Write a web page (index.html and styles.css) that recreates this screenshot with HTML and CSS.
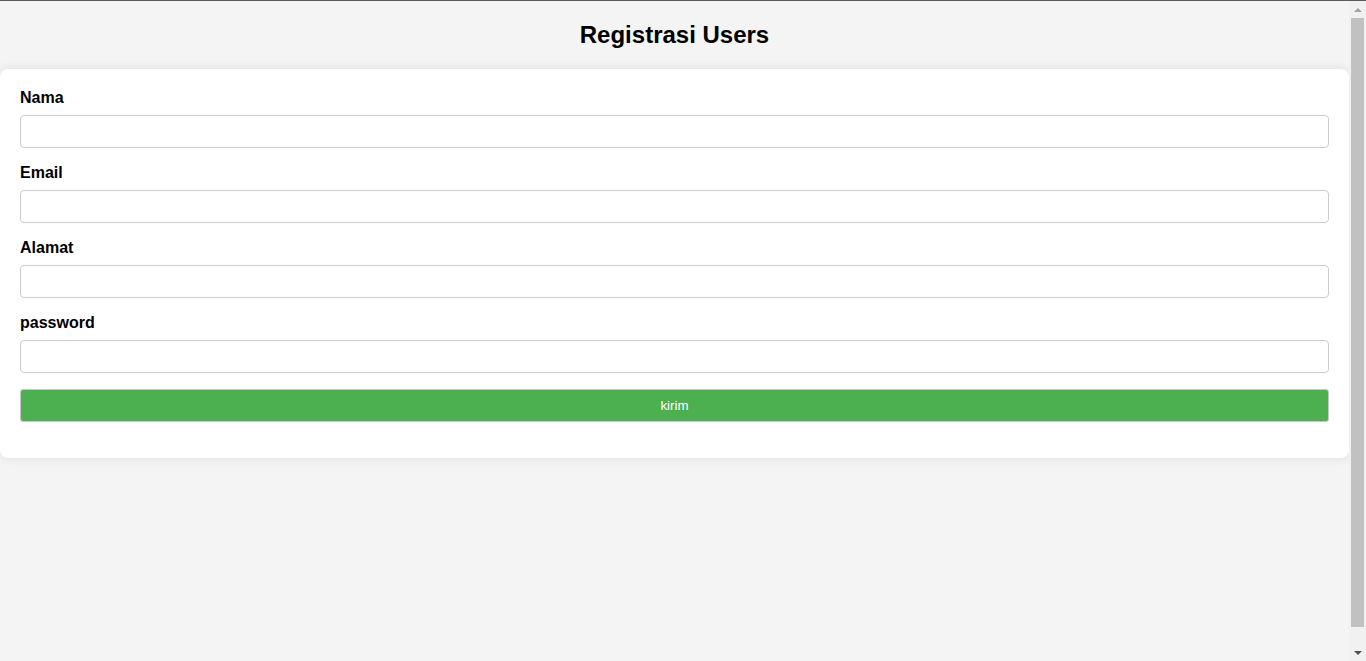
FILE: index.html
```html
<!DOCTYPE html>
<html lang="id">
<head>
<meta charset="utf-8">
<title>Registrasi Users</title>
<link rel="stylesheet" href="styles.css">
</head>
<body>
<h1 class="title">Registrasi Users</h1>
<div class="card">
  <form class="form">
    <label class="label" for="nama">Nama</label>
    <input class="input" type="text" id="nama">
    <label class="label" for="email">Email</label>
    <input class="input" type="email" id="email">
    <label class="label" for="alamat">Alamat</label>
    <input class="input" type="text" id="alamat">
    <label class="label" for="password">password</label>
    <input class="input" type="password" id="password">
    <button class="btn" type="button">kirim</button>
  </form>
</div>
<div class="scrollbar" aria-hidden="true">
  <span class="sb-arrow sb-up"></span>
  <span class="sb-thumb"></span>
  <span class="sb-arrow sb-down"></span>
</div>
</body>
</html>
```
FILE: styles.css
```css
html {
  border-top: 1px solid #5a5a5a;
}
body {
  margin: 0 17px 0 0;
  padding: 0 0 20px 0;
  min-height: 100vh;
  background: #f4f4f4;
  font-family: "Liberation Sans", Arial, sans-serif;
  color: #000;
}
.title {
  font-size: 24px;
  font-weight: bold;
  text-align: center;
  margin: 0;
  padding: 20px 0 20px 0;
  line-height: 28px;
}
.card {
  background: #fff;
  border-radius: 8px;
  box-shadow: 0 0 10px rgba(0, 0, 0, 0.1);
  padding: 20px 20px 36px 20px;
}
.form {
  display: flex;
  flex-direction: column;
}
.label {
  display: block;
  font-size: 16px;
  font-weight: bold;
  line-height: 17px;
  margin-bottom: 9px;
}
.input {
  box-sizing: border-box;
  height: 33px;
  width: 100%;
  border: 1px solid #ccc;
  border-radius: 4px;
  margin: 0 0 16px 0;
  padding: 8px;
  font-size: 14px;
  background: #fff;
}
.btn {
  box-sizing: border-box;
  height: 33px;
  width: 100%;
  margin: 0;
  background: #4caf50;
  color: #fff;
  border: 1px solid #c8c8c8;
  border-radius: 3px;
  font-family: "Liberation Sans", Arial, sans-serif;
  font-size: 13.33px;
  font-weight: normal;
}
.scrollbar {
  position: fixed;
  top: 1px;
  right: 0;
  bottom: 0;
  width: 17px;
  background: #f1f1f1;
  display: flex;
  flex-direction: column;
  align-items: center;
}
.sb-arrow {
  flex: 0 0 17px;
  width: 17px;
  display: flex;
  align-items: center;
  justify-content: center;
}
.sb-arrow::before {
  content: "";
  width: 0;
  height: 0;
  border-left: 4px solid transparent;
  border-right: 4px solid transparent;
}
.sb-up::before {
  border-bottom: 4px solid #a3a3a3;
}
.sb-down::before {
  border-top: 4px solid #505050;
}
.sb-thumb {
  width: 13px;
  height: 609px;
  background: #c1c1c1;
  margin-bottom: auto;
}
```
